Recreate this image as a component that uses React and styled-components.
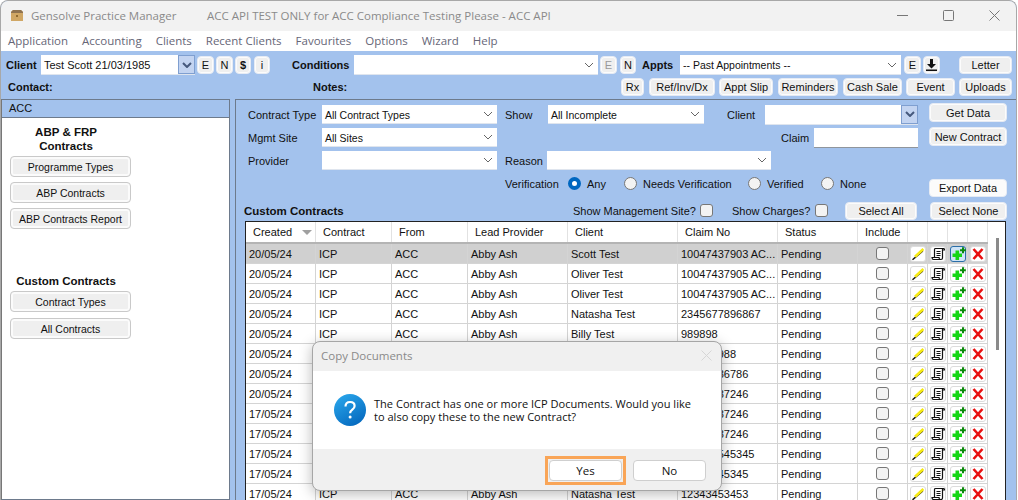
import React from "react";
import styled, { createGlobalStyle } from "styled-components";

const SANS = `"Liberation Sans", Arial, sans-serif`;
const UI = `"Open Sans", "Noto Sans", sans-serif`;
const BLUE = "#a3c2ed";

const GlobalStyle = createGlobalStyle`
  html, body {
    margin: 0;
    padding: 0;
    background: #fff;
    overflow: hidden;
  }
  #root {
    width: 1018px;
    height: 500px;
    position: relative;
    overflow: hidden;
  }
  * {
    box-sizing: border-box;
  }
`;

const Window = styled.div`
  width: 1017px;
  height: 500px;
  display: flex;
  flex-direction: column;
  border: 1px solid #a8a8a8;
  border-bottom: 0;
  border-radius: 8px 8px 0 0;
  overflow: hidden;
  font: 11px ${SANS};
  color: #111;
  background: ${BLUE};
`;

const TitleBar = styled.div`
  height: 30px;
  flex: none;
  display: flex;
  align-items: center;
  background: #f2f2f2;
  color: #8a8a8a;
  font: 11.5px ${UI};
  padding: 0 0 2px 9px;
`;

const AppName = styled.span`
  margin-left: 7px;
  width: 176px;
`;

const WindowButtons = styled.div`
  margin-left: auto;
  display: flex;
  align-items: center;
  gap: 35px;
  padding-right: 16px;
  color: #777;
`;

const MenuBar = styled.div`
  height: 20px;
  flex: none;
  display: flex;
  align-items: center;
  gap: 14px;
  padding: 0 0 2px 7px;
  background: #fff;
  color: #667;
  font: 11.5px ${UI};
`;

const Toolbar = styled.div`
  height: 48px;
  flex: none;
  padding-top: 4px;
  display: flex;
  flex-direction: column;
  gap: 3px;
`;

const ToolRow = styled.div`
  display: flex;
  align-items: center;
  height: ${(p) => p.$h || 20}px;
  padding-left: ${(p) => p.$pad || 0}px;
`;

const Label = styled.span`
  flex: none;
  width: ${(p) => (p.$w ? p.$w + "px" : "auto")};
  margin-left: ${(p) => p.$ml || 0}px;
  font-weight: ${(p) => (p.$bold ? 700 : 400)};
  font-size: ${(p) => p.$fs || 11}px;
  white-space: nowrap;
`;

const Btn = styled.div`
  flex: none;
  width: ${(p) => (p.$w ? p.$w + "px" : "auto")};
  height: ${(p) => p.$h || 18}px;
  margin-left: ${(p) => p.$ml || 0}px;
  margin-top: ${(p) => p.$mt || 0}px;
  display: flex;
  align-items: center;
  justify-content: center;
  border: 1px solid #e6ebf4;
  border-radius: 4px;
  background: ${(p) => (p.$plain ? "#fbfbfb" : "#efefef")};
  box-shadow: inset 0 0 0 1px #fcfcfc;
  color: ${(p) => (p.$off ? "#999" : "#111")};
  font-weight: ${(p) => (p.$bold ? 700 : 400)};
  white-space: nowrap;
`;

const SideBtn = styled(Btn)`
  width: 121px;
  height: 21px;
  border-color: #c9c9c9;
  box-shadow: inset 0 0 0 2px #fbfbfb;
  font-size: 10.5px;
`;

const ComboBox = styled.div`
  flex: none;
  width: ${(p) => p.$w}px;
  height: ${(p) => p.$h || 19}px;
  margin-left: ${(p) => p.$ml || 0}px;
  display: flex;
  align-items: center;
  justify-content: space-between;
  padding-left: 3px;
  background: #fff;
  border-bottom: 1px solid #dfe5ee;
  font-size: ${(p) => p.$fs || 10.5}px;
  white-space: nowrap;
`;

const ComboValue = styled.span`
  padding-top: 1px;
`;

const ComboArrow = styled.span`
  flex: none;
  height: 100%;
  width: 17px;
  display: flex;
  align-items: center;
  justify-content: center;
  padding-right: ${(p) => (p.$blue ? 0 : 2)}px;
  background: ${(p) => (p.$blue ? "#c3d4f1" : "transparent")};
  border: ${(p) => (p.$blue ? "1px solid #7f9fd0" : "0")};
`;

const Main = styled.div`
  flex: 1;
  min-height: 0;
  display: flex;
  gap: 5px;
`;

const Sidebar = styled.div`
  width: 229px;
  flex: none;
  background: #fff;
  border: 1px solid #6d7a8c;
  border-left-color: #777;
`;

const SideHead = styled.div`
  height: 18px;
  padding: 2px 0 0 7px;
  background: ${BLUE};
  border-bottom: 1px solid #6d7a8c;
`;

const SideGroup = styled.div`
  display: flex;
  flex-direction: column;
  gap: ${(p) => p.$gap}px;
  padding-left: 8px;
  margin-top: ${(p) => p.$mt}px;
`;

const SideTitle = styled.div`
  width: 112px;
  text-align: center;
  font-weight: 700;
  font-size: 11.5px;
  line-height: 14px;
  margin-bottom: ${(p) => p.$mb}px;
`;

const Content = styled.div`
  flex: 1;
  min-width: 0;
  border: 1px solid #6d7a8c;
  border-right: 0;
  border-bottom: 0;
  padding-left: 9px;
`;

const TopArea = styled.div`
  height: 100px;
  display: flex;
`;

const Filters = styled.div`
  width: 684px;
  padding: 5px 0 0 3px;
  display: flex;
  flex-direction: column;
  gap: 4px;
`;

const FilterRow = styled.div`
  height: 19px;
  display: flex;
  align-items: center;
`;

const SideButtons = styled.div`
  padding-top: 3px;
  display: flex;
  flex-direction: column;
`;

const TextInput = styled.div`
  flex: none;
  width: 104px;
  height: 20px;
  background: #fff;
  border-bottom: 1px solid #8f959c;
`;

const RadioItem = styled.div`
  flex: none;
  width: ${(p) => p.$w}px;
  display: flex;
  align-items: center;
  gap: 6px;
`;

const RadioDot = styled.span`
  flex: none;
  width: 13px;
  height: 13px;
  border-radius: 50%;
  background: ${(p) => (p.$on ? "#fff" : "#f3f3f3")};
  border: ${(p) => (p.$on ? "4px solid #0067c0" : "1px solid #777")};
`;

const HeadingRow = styled.div`
  height: 21px;
  display: flex;
  align-items: center;
  margin-left: -1px;
`;

const CheckBox = styled.span`
  flex: none;
  display: block;
  width: 13px;
  height: 13px;
  background: #f3f3f3;
  border: 1px solid #777;
  border-radius: 3px;
`;

const Table = styled.div`
  width: 761px;
  height: 280px;
  display: flex;
  background: #fff;
  border: 1px solid #222;
  border-bottom: 0;
  overflow: hidden;
`;

const TableBody = styled.div`
  width: 742px;
  flex: none;
`;

const ScrollTrack = styled.div`
  flex: 1;
  padding: 16px 0 0 8px;
`;

const ScrollThumb = styled.div`
  width: 3px;
  height: 112px;
  background: #8a8a8a;
`;

const COLUMNS = "70px 76px 76px 100px 110px 100px 80px 50px 20px 20px 20px 20px";

const HeaderRow = styled.div`
  height: 22px;
  display: grid;
  grid-template-columns: ${COLUMNS};
  border-bottom: 2px solid #b4b4b4;
`;

const HeadCell = styled.div`
  display: flex;
  align-items: center;
  justify-content: ${(p) => (p.$between ? "space-between" : "flex-start")};
  padding: 0 3px 0 7px;
  border-right: 1px solid #e2e2e2;
  white-space: nowrap;
`;

const SortArrow = styled.span`
  width: 0;
  height: 0;
  border-left: 5px solid transparent;
  border-right: 5px solid transparent;
  border-top: 5px solid #a0a0a0;
`;

const Row = styled.div`
  height: 20px;
  display: grid;
  grid-template-columns: ${COLUMNS};
  background: ${(p) => (p.$selected ? "#d0d0d0" : "#fff")};
  border-bottom: 1px solid #d4d4d4;
`;

const Cell = styled.div`
  display: flex;
  align-items: center;
  justify-content: ${(p) => (p.$center ? "center" : "flex-start")};
  padding-left: ${(p) => (p.$center ? 0 : 3)}px;
  border-right: 1px solid #d4d4d4;
  white-space: nowrap;
  overflow: hidden;
`;

const IconButton = styled.span`
  width: 16px;
  height: 16px;
  display: flex;
  align-items: center;
  justify-content: center;
  background: ${(p) => (p.$focus ? "#cfe4f6" : "#fff")};
  border: 1px solid ${(p) => (p.$focus ? "#2a6ea8" : "#dcdcdc")};
  border-radius: 3px;

  svg {
    flex: none;
  }
`;

const Dialog = styled.div`
  position: absolute;
  left: 312px;
  top: 341px;
  width: 410px;
  height: 150px;
  display: flex;
  flex-direction: column;
  border: 1px solid #a6a6a6;
  border-radius: 8px;
  overflow: hidden;
  background: #f0f0f0;
  box-shadow: 0 3px 14px rgba(0, 0, 0, 0.28);
  font: 11.5px ${UI};
  color: #111;
`;

const DialogTitle = styled.div`
  height: 29px;
  flex: none;
  display: flex;
  align-items: center;
  justify-content: space-between;
  padding: 0 9px 2px 8px;
  color: #8a8a8a;
`;

const DialogBody = styled.div`
  height: 78px;
  flex: none;
  display: flex;
  align-items: center;
  gap: 8px;
  padding-left: 21px;
  background: #fff;
`;

const DialogText = styled.div`
  font-size: 11.05px;
  line-height: 13px;
  width: 325px;
  padding-bottom: 1px;
`;

const DialogFooter = styled.div`
  flex: 1;
  display: flex;
  align-items: flex-start;
  justify-content: flex-end;
  gap: 11px;
  padding: 11px 15px 0 0;
`;

const DialogBtn = styled.div`
  position: relative;
  width: 73px;
  height: 21px;
  display: flex;
  align-items: center;
  justify-content: center;
  background: #fff;
  border: 1px solid #cfcfcf;
  border-radius: 4px;
`;

const Highlight = styled.span`
  position: absolute;
  inset: -5px;
  border: 3px solid #f9a557;
`;

const Chevron = ({ blue }) => (
  <svg width="10" height="6" viewBox="0 0 10 6" fill="none">
    <path d="M1 1l4 4 4-4" stroke={blue ? "#46597d" : "#666"} strokeWidth={blue ? 2 : 1} />
  </svg>
);

const Combo = ({ w, ml, h, value, blue, fs }) => (
  <ComboBox $w={w} $ml={ml} $h={h} $fs={fs}>
    <ComboValue>{value}</ComboValue>
    <ComboArrow $blue={blue}>
      <Chevron blue={blue} />
    </ComboArrow>
  </ComboBox>
);

const Radio = ({ w, on, children }) => (
  <RadioItem $w={w}>
    <RadioDot $on={on} />
    {children}
  </RadioItem>
);

const BoxLogo = () => (
  <svg width="14" height="13" viewBox="0 0 14 13">
    <path d="M1 3l2-2h8l2 2v9H1z" fill="#d0a765" />
    <path d="M1 3l2-2h8l2 2v1H1z" fill="#8f7350" />
    <rect x="6" y="6" width="2" height="2" fill="#8f6a30" />
  </svg>
);

const PencilIcon = () => (
  <svg width="14" height="14" viewBox="0 0 14 14">
    <path d="M1.500 12.800L11.800 4" stroke="#111" strokeWidth="1.500" />
    <path d="M4 9.700L12.400 2" stroke="#f7ea14" strokeWidth="2.600" />
  </svg>
);

const ScrollIcon = () => (
  <svg width="14" height="14" viewBox="0 0 14 14" fill="none" stroke="#111" strokeWidth="1.200">
    <path d="M3.500 10.500V2.500c0-.8.5-1 1-1h8c.8 0 1 .7 1 1.500h-2" />
    <path d="M11.500 2v9c0 1-.7 1.500-1.500 1.500H2.500C1.500 12.500 1 11.500 1 10.500h7c0 1 .5 2 1.500 2" />
    <path d="M5.500 4.500h4M5.500 6.500h4M5.500 8.500h4" />
  </svg>
);

const PlusIcon = () => (
  <svg width="16" height="16" viewBox="0 0 16 16">
    <path d="M5.500 4.600h3.600v2.900h2.900v3.600H9.100v3H5.500v-3h-3V7.500h3z" fill="#14d614" />
    <path d="M12 1.200h2v2h1.800v2H14v2h-2v-2h-2v-2h2z" fill="#0a8a0a" />
  </svg>
);

const CrossIcon = () => (
  <svg width="12" height="12" viewBox="0 0 12 12">
    <path d="M1.500 1l9 10M10.500 1l-9 10" stroke="#e81010" strokeWidth="2.600" />
  </svg>
);

const DownloadIcon = () => (
  <svg width="11" height="12" viewBox="0 0 11 12">
    <path d="M4 0h3v5h3L5.500 9.500 1 5h3z" fill="#111" />
    <rect x="0" y="10.500" width="11" height="1.500" fill="#111" />
  </svg>
);

const QuestionIcon = () => (
  <svg width="32" height="32" viewBox="0 0 32 32">
    <defs>
      <linearGradient id="qfill" x1="0.2" y1="0" x2="0.8" y2="1">
        <stop offset="0" stopColor="#29a5ea" />
        <stop offset="1" stopColor="#0467bd" />
      </linearGradient>
    </defs>
    <circle cx="16" cy="16" r="16" fill="url(#qfill)" />
    <path d="M11.500 12.500c0-3 2-4.500 4.600-4.500s4.500 1.500 4.500 4c0 3.800-4.500 3.600-4.500 7.200" fill="none" stroke="#fff" strokeWidth="2.200" />
    <circle cx="16.100" cy="23" r="1.500" fill="#fff" />
  </svg>
);

const MENU = ["Application", "Accounting", "Clients", "Recent Clients", "Favourites", "Options", "Wizard", "Help"];

const ROWS = [
  ["20/05/24", "Scott Test", "10047437903 AC..."],
  ["20/05/24", "Oliver Test", "10047437905 AC..."],
  ["20/05/24", "Oliver Test", "10047437905 AC..."],
  ["20/05/24", "Natasha Test", "2345677896867"],
  ["20/05/24", "Billy Test", "989898"],
  ["20/05/24", "Billy Test", "989898988"],
  ["20/05/24", "Natasha Test", "23456786786"],
  ["20/05/24", "Natasha Test", "23456787246"],
  ["17/05/24", "Natasha Test", "23456787246"],
  ["17/05/24", "Natasha Test", "23456787246"],
  ["17/05/24", "Natasha Test", "123434545345"],
  ["17/05/24", "Natasha Test", "12343445345"],
  ["17/05/24", "Natasha Test", "12343453453"],
];

const HEADERS = ["Contract", "From", "Lead Provider", "Client", "Claim No", "Status", "Include"];

export default function App() {
  return (
    <>
      <GlobalStyle />
      <Window>
        <TitleBar>
          <BoxLogo />
          <AppName>Gensolve Practice Manager</AppName>
          <span>ACC API TEST ONLY for ACC Compliance Testing Please - ACC API</span>
          <WindowButtons>
            <svg width="11" height="11" viewBox="0 0 11 11">
              <path d="M0 5.500h11" stroke="#777" />
            </svg>
            <svg width="11" height="11" viewBox="0 0 11 11" fill="none">
              <rect x="0.500" y="0.500" width="10" height="10" rx="1" stroke="#777" />
            </svg>
            <svg width="11" height="11" viewBox="0 0 11 11">
              <path d="M.5.500l10 10M10.500.500l-10 10" stroke="#777" />
            </svg>
          </WindowButtons>
        </TitleBar>

        <MenuBar>
          {MENU.map((m) => (
            <span key={m}>{m}</span>
          ))}
        </MenuBar>

        <Toolbar>
          <ToolRow $pad={5}>
            <Label $w={35} $bold>Client</Label>
            <Combo w={154} h={20} fs={11} value="Test Scott 21/03/1985" blue />
            <Btn $w={17} $ml={2}>E</Btn>
            <Btn $w={17} $ml={2}>N</Btn>
            <Btn $w={16} $ml={2} $bold>$</Btn>
            <Btn $w={16} $ml={3}>i</Btn>
            <Label $w={62} $ml={22} $bold>Conditions</Label>
            <Combo w={244} h={20} value="" />
            <Btn $w={17} $ml={2} $off>E</Btn>
            <Btn $w={16} $ml={3}>N</Btn>
            <Label $w={38} $ml={6} $bold>Appts</Label>
            <Combo w={221} h={20} value="-- Past Appointments --" />
            <Btn $w={17} $ml={3}>E</Btn>
            <Btn $w={17} $ml={2}><DownloadIcon /></Btn>
            <Btn $w={53} $ml={19}>Letter</Btn>
          </ToolRow>
          <ToolRow $pad={7} $h={18}>
            <Label $w={305} $bold>Contact:</Label>
            <Label $w={308} $bold>Notes:</Label>
            <Btn $w={23}>Rx</Btn>
            <Btn $w={66} $ml={5}>Ref/Inv/Dx</Btn>
            <Btn $w={54} $ml={4}>Appt Slip</Btn>
            <Btn $w={60} $ml={5}>Reminders</Btn>
            <Btn $w={59} $ml={5}>Cash Sale</Btn>
            <Btn $w={49} $ml={4}>Event</Btn>
            <Btn $w={53} $ml={4}>Uploads</Btn>
          </ToolRow>
        </Toolbar>

        <Main>
          <Sidebar>
            <SideHead>ACC</SideHead>
            <SideGroup $mt={7} $gap={5}>
              <SideTitle $mb={-2}>ABP &amp; FRP<br />Contracts</SideTitle>
              <SideBtn>Programme Types</SideBtn>
              <SideBtn>ABP Contracts</SideBtn>
              <SideBtn>ABP Contracts Report</SideBtn>
            </SideGroup>
            <SideGroup $mt={45} $gap={6}>
              <SideTitle $mb={-3}>Custom Contracts</SideTitle>
              <SideBtn>Contract Types</SideBtn>
              <SideBtn>All Contracts</SideBtn>
            </SideGroup>
          </Sidebar>

          <Content>
            <TopArea>
              <Filters>
                <FilterRow>
                  <Label $w={74}>Contract Type</Label>
                  <Combo w={175} value="All Contract Types" />
                  <Label $w={43} $ml={8}>Show</Label>
                  <Combo w={156} value="All Incomplete" />
                  <Label $w={38} $ml={23}>Client</Label>
                  <Combo w={153} h={20} value="" blue />
                </FilterRow>
                <FilterRow>
                  <Label $w={74}>Mgmt Site</Label>
                  <Combo w={175} value="All Sites" />
                  <Label $w={33} $ml={284}>Claim</Label>
                  <TextInput />
                </FilterRow>
                <FilterRow>
                  <Label $w={74}>Provider</Label>
                  <Combo w={175} value="" />
                  <Label $w={42} $ml={8}>Reason</Label>
                  <Combo w={224} value="" />
                </FilterRow>
                <FilterRow>
                  <Label $w={63} $ml={257}>Verification</Label>
                  <Radio w={56} on>Any</Radio>
                  <Radio w={124}>Needs Verification</Radio>
                  <Radio w={73}>Verified</Radio>
                  <Radio w={50}>None</Radio>
                </FilterRow>
              </Filters>
              <SideButtons>
                <Btn $w={78} $h={19}>Get Data</Btn>
                <Btn $w={78} $h={19} $mt={5}>New Contract</Btn>
                <Btn $w={78} $h={18} $mt={33} $plain>Export Data</Btn>
              </SideButtons>
            </TopArea>

            <HeadingRow>
              <Label $w={329} $bold $fs={11.5}>Custom Contracts</Label>
              <Label $w={127}>Show Management Site?</Label>
              <CheckBox />
              <Label $w={83} $ml={19}>Show Charges?</Label>
              <CheckBox />
              <Btn $w={72} $ml={17}>Select All</Btn>
              <Btn $w={77} $ml={13}>Select None</Btn>
            </HeadingRow>

            <Table>
              <TableBody>
                <HeaderRow>
                  <HeadCell $between>Created<SortArrow /></HeadCell>
                  {HEADERS.map((h) => (
                    <HeadCell key={h}>{h}</HeadCell>
                  ))}
                  <HeadCell />
                  <HeadCell />
                  <HeadCell />
                  <HeadCell />
                </HeaderRow>
                {ROWS.map(([date, client, claim], i) => (
                  <Row key={i} $selected={i === 0}>
                    <Cell>{date}</Cell>
                    <Cell>ICP</Cell>
                    <Cell>ACC</Cell>
                    <Cell>Abby Ash</Cell>
                    <Cell>{client}</Cell>
                    <Cell>{claim}</Cell>
                    <Cell>Pending</Cell>
                    <Cell $center><CheckBox /></Cell>
                    <Cell $center><IconButton><PencilIcon /></IconButton></Cell>
                    <Cell $center><IconButton><ScrollIcon /></IconButton></Cell>
                    <Cell $center><IconButton $focus={i === 0}><PlusIcon /></IconButton></Cell>
                    <Cell $center><IconButton><CrossIcon /></IconButton></Cell>
                  </Row>
                ))}
              </TableBody>
              <ScrollTrack>
                <ScrollThumb />
              </ScrollTrack>
            </Table>
          </Content>
        </Main>
      </Window>

      <Dialog>
        <DialogTitle>
          Copy Documents
          <svg width="11" height="11" viewBox="0 0 11 11">
            <path d="M.5.500l10 10M10.500.500l-10 10" stroke="#d6d6d6" />
          </svg>
        </DialogTitle>
        <DialogBody>
          <QuestionIcon />
          <DialogText>
            The Contract has one or more ICP Documents. Would you like to also copy these to the new Contract?
          </DialogText>
        </DialogBody>
        <DialogFooter>
          <DialogBtn>Yes<Highlight /></DialogBtn>
          <DialogBtn>No</DialogBtn>
        </DialogFooter>
      </Dialog>
    </>
  );
}
